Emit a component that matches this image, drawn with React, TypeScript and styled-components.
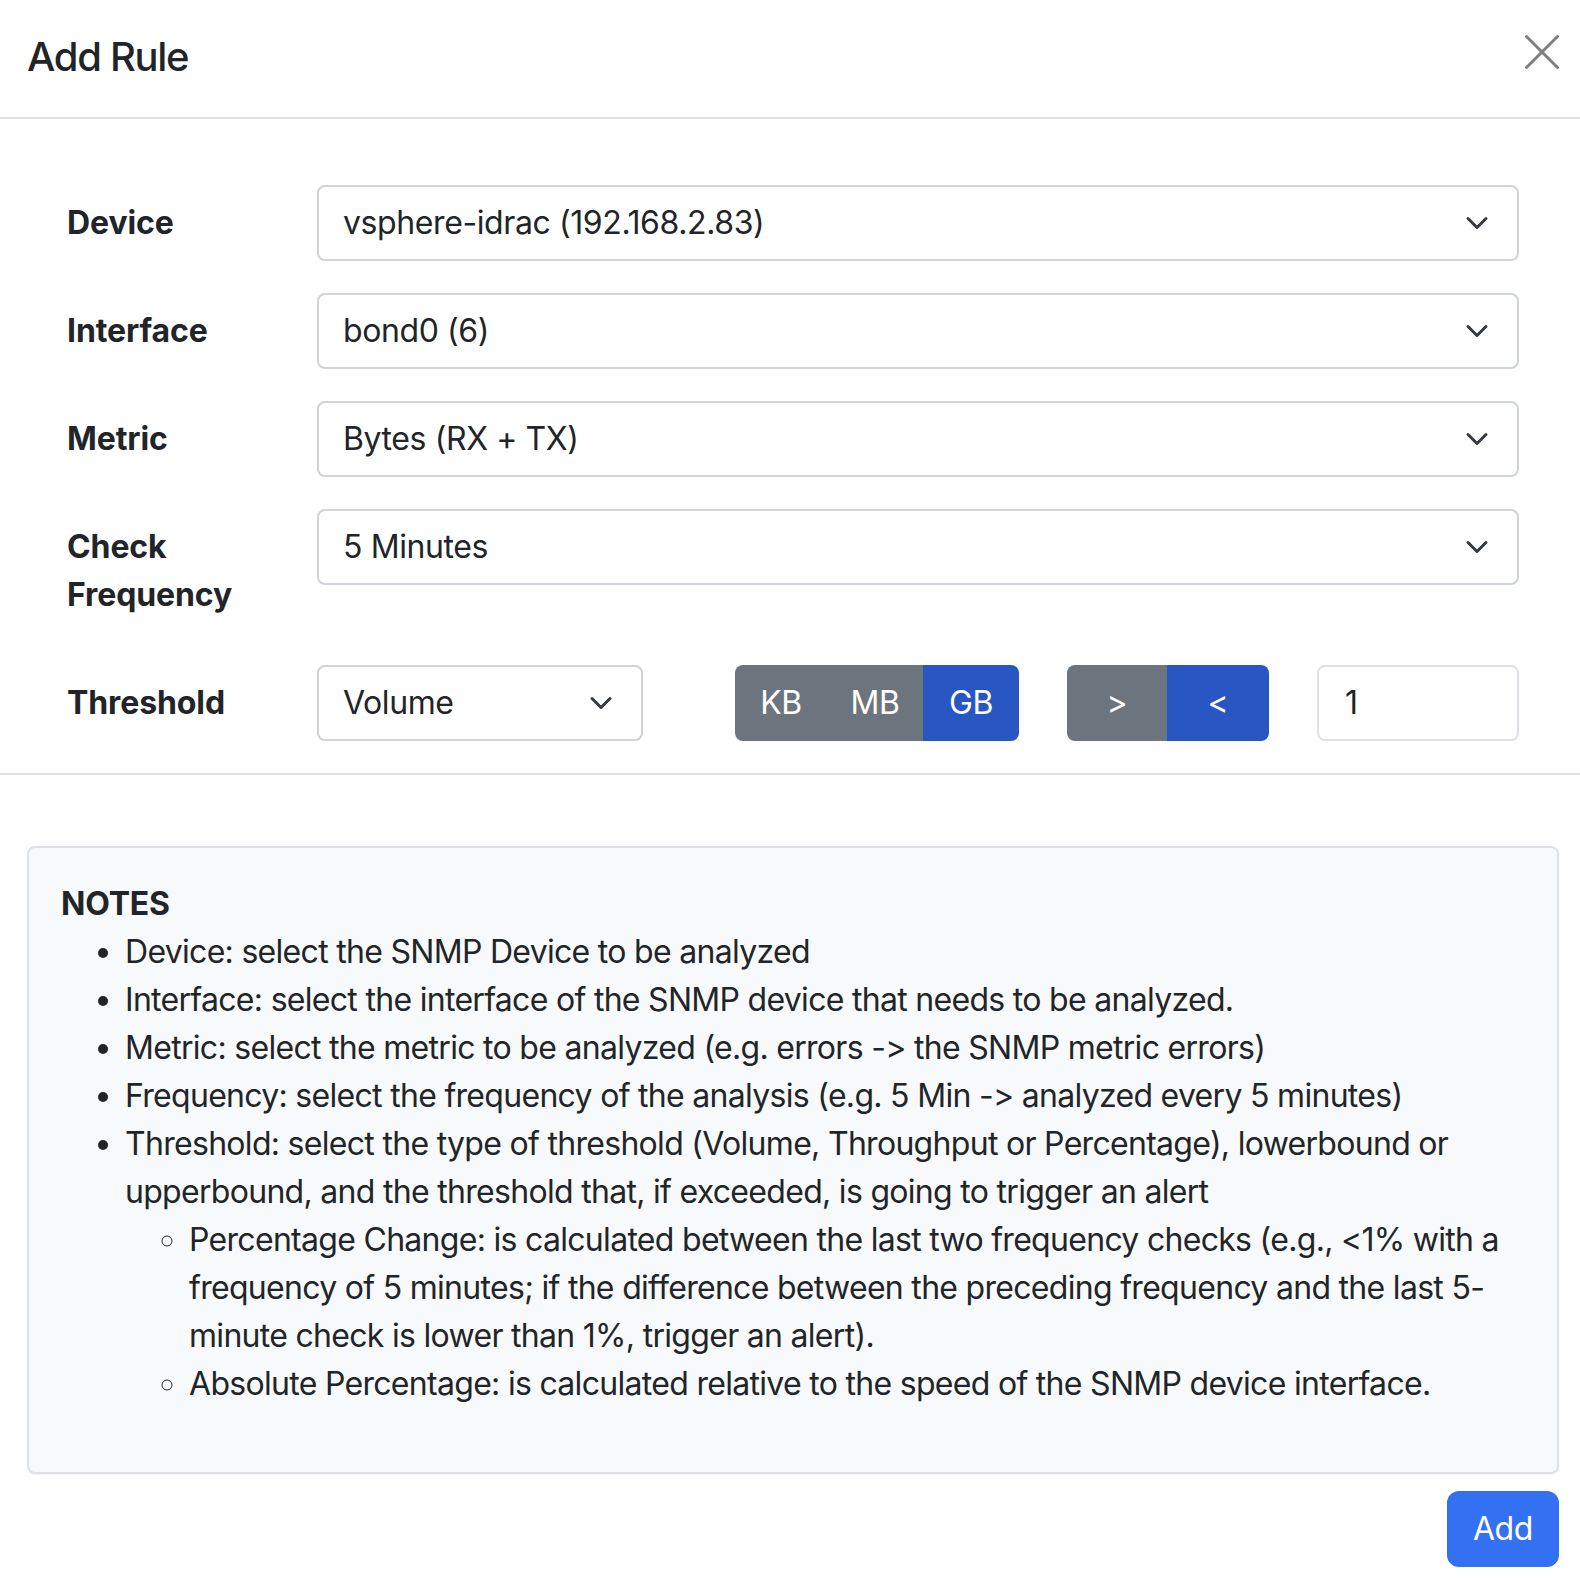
import React from "react";
import styled, { createGlobalStyle } from "styled-components";

const GlobalStyle = createGlobalStyle`
  html, body { margin: 0; padding: 0; background: #ffffff; }
  body {
    font-family: Inter, "Noto Sans", "Liberation Sans", sans-serif;
    color: #212529;
    font-size: 32px;
    line-height: 48px;
    letter-spacing: -0.6px;
    font-feature-settings: "calt" 0;
    font-variant-ligatures: no-contextual;
  }
  * { box-sizing: border-box; }
`;

const Modal = styled.div`
  width: 1580px;
  min-height: 1580px;
  background: #fff;
`;

const Header = styled.header`
  display: flex;
  justify-content: space-between;
  align-items: flex-start;
  padding: 33px 21px 36px 27px;
  border-bottom: 2px solid #dee2e6;
`;

const Title = styled.h5`
  margin: 0;
  font-size: 40px;
  line-height: 48px;
  font-weight: 500;
  letter-spacing: -1.3px;
  color: #212529;
`;

const CloseButton = styled.button`
  margin-top: 2px;
  width: 34px;
  height: 34px;
  padding: 0;
  border: 0;
  background: transparent;
  display: flex;
  align-items: center;
  justify-content: center;
  cursor: pointer;
`;

const Form = styled.form`
  padding: 66px 61px 0 67px;
  border-bottom: 2px solid #dee2e6;
`;

const Row = styled.div`
  display: flex;
  align-items: flex-start;
  margin-bottom: 32px;
`;

const Label = styled.label`
  width: 250px;
  flex: none;
  padding: 14px 24px 14px 0;
  font-weight: 700;
  line-height: 48px;
  letter-spacing: -0.1px;
`;

const Controls = styled.div`
  flex: 1;
  display: flex;
  align-items: center;
  gap: 48px;
`;

const SelectBox = styled.div<{ $width?: number }>`
  height: 76px;
  width: ${(p) => (p.$width ? `${p.$width}px` : "100%")};
  flex: ${(p) => (p.$width ? "none" : "1")};
  display: flex;
  align-items: center;
  justify-content: space-between;
  padding: 0 24px;
  border: 2px solid #ced4da;
  border-radius: 8px;
  background: #fff;
  color: #212529;
  letter-spacing: -0.4px;
`;

const VolumeWrap = styled.div`
  margin-right: 44px;
`;

const BtnGroup = styled.div`
  display: flex;
  height: 76px;
  border-radius: 8px;
  overflow: hidden;
  flex: none;
`;

const GroupButton = styled.button<{ $active?: boolean; $width: number }>`
  width: ${(p) => p.$width}px;
  height: 76px;
  padding: 0;
  border: 0;
  font-family: inherit;
  font-size: 32px;
  line-height: 48px;
  letter-spacing: -0.4px;
  color: #fff;
  background: ${(p) => (p.$active ? "#2857c4" : "#6c757d")};
  cursor: pointer;
`;

const NumberInput = styled.div`
  width: 202px;
  height: 76px;
  flex: none;
  display: flex;
  align-items: center;
  padding: 0 26px;
  border: 2px solid #dee2e6;
  border-radius: 8px;
`;

const NotesArea = styled.div`
  padding: 71px 21px 0 27px;
`;

const NotesBox = styled.div`
  background: #f8f9fa;
  border: 2px solid #dee2e6;
  border-radius: 8px;
  padding: 32px;
  letter-spacing: -0.7px;
  box-shadow: 0 1px 2px rgba(0, 0, 0, 0.06);
`;

const NotesTitle = styled.div`
  font-weight: 700;
  letter-spacing: -0.2px;
`;

const List = styled.ul<{ $nested?: boolean }>`
  margin: 0 0 ${(p) => (p.$nested ? "0" : "32px")} 0;
  padding-left: 64px;
  list-style: ${(p) => (p.$nested ? "circle" : "disc")};
`;

const Footer = styled.div`
  display: flex;
  justify-content: flex-end;
  padding: 17px 21px 0 27px;
`;

const PrimaryButton = styled.button`
  height: 76px;
  padding: 0 24px;
  border: 2px solid #3470f2;
  border-radius: 12px;
  background: #3470f2;
  color: #fff;
  font-family: inherit;
  font-size: 32px;
  line-height: 48px;
  letter-spacing: -0.4px;
  cursor: pointer;
`;

const Chevron = () => (
  <svg width="32" height="24" viewBox="0 0 16 16" fill="none">
    <path
      d="M2 5l6 6 6-6"
      stroke="#343a40"
      strokeWidth="2"
      strokeLinecap="round"
      strokeLinejoin="round"
    />
  </svg>
);

const Select = ({ value, width }: { value: string; width?: number }) => (
  <SelectBox $width={width}>
    <span>{value}</span>
    <Chevron />
  </SelectBox>
);

export default function App() {
  return (
    <>
      <GlobalStyle />
      <Modal>
        <Header>
          <Title>Add Rule</Title>
          <CloseButton aria-label="Close">
            <svg width="34" height="34" viewBox="0 0 34 34">
              <path d="M1.5 1.5L32.5 32.5M32.5 1.5L1.5 32.5" stroke="#7f7f7f" strokeWidth="3" strokeLinecap="round" />
            </svg>
          </CloseButton>
        </Header>
        <Form>
          <Row>
            <Label>Device</Label>
            <Controls>
              <Select value="vsphere-idrac (192.168.2.83)" />
            </Controls>
          </Row>
          <Row>
            <Label>Interface</Label>
            <Controls>
              <Select value="bond0 (6)" />
            </Controls>
          </Row>
          <Row>
            <Label>Metric</Label>
            <Controls>
              <Select value="Bytes (RX + TX)" />
            </Controls>
          </Row>
          <Row>
            <Label>Check Frequency</Label>
            <Controls>
              <Select value="5 Minutes" />
            </Controls>
          </Row>
          <Row>
            <Label>Threshold</Label>
            <Controls>
              <VolumeWrap>
                <Select value="Volume" width={326} />
              </VolumeWrap>
              <BtnGroup>
                <GroupButton type="button" $width={92}>KB</GroupButton>
                <GroupButton type="button" $width={96}>MB</GroupButton>
                <GroupButton type="button" $width={96} $active>GB</GroupButton>
              </BtnGroup>
              <BtnGroup>
                <GroupButton type="button" $width={100}>&gt;</GroupButton>
                <GroupButton type="button" $width={102} $active>&lt;</GroupButton>
              </BtnGroup>
              <NumberInput>1</NumberInput>
            </Controls>
          </Row>
        </Form>
        <NotesArea>
          <NotesBox>
            <NotesTitle>NOTES</NotesTitle>
            <List>
              <li>Device: select the SNMP Device to be analyzed</li>
              <li>Interface: select the interface of the SNMP device that needs to be analyzed.</li>
              <li>Metric: select the metric to be analyzed (e.g. errors -&gt; the SNMP metric errors)</li>
              <li>Frequency: select the frequency of the analysis (e.g. 5 Min -&gt; analyzed every 5 minutes)</li>
              <li>
                Threshold: select the type of threshold (Volume, Throughput or Percentage), lowerbound or upperbound, and the threshold that, if exceeded, is going to trigger an alert
                <List $nested>
                  <li>
                    Percentage Change: is calculated between the last two frequency checks (e.g., &lt;1% with a frequency of 5 minutes; if the difference between the preceding frequency and the last 5-minute check is lower than 1%, trigger an alert).
                  </li>
                  <li>Absolute Percentage: is calculated relative to the speed of the SNMP device interface.</li>
                </List>
              </li>
            </List>
          </NotesBox>
        </NotesArea>
        <Footer>
          <PrimaryButton type="button">Add</PrimaryButton>
        </Footer>
      </Modal>
    </>
  );
}
